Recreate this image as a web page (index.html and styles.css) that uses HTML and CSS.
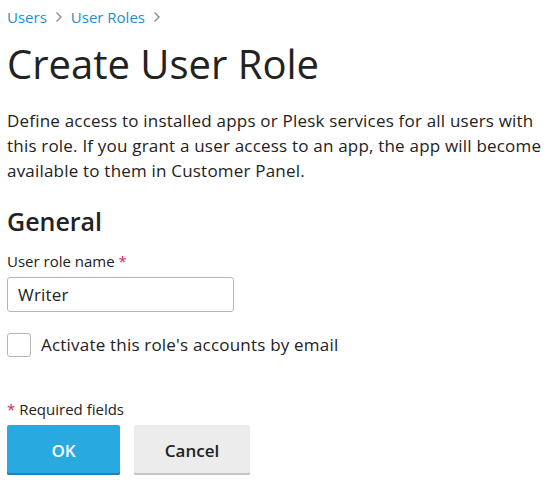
FILE: index.html
```html
<!DOCTYPE html>
<html lang="en">
<head>
<meta charset="utf-8">
<title>Create User Role</title>
<link rel="stylesheet" href="styles.css">
</head>
<body>
<div class="page">
  <nav class="breadcrumbs">
    <a href="#" class="crumb">Users</a>
    <span class="sep"><svg width="8" height="12" viewBox="0 0 8 12"><path d="M1.5 1.5 L6 6 L1.5 10.5" fill="none" stroke="#8a8a8a" stroke-width="1.4"/></svg></span>
    <a href="#" class="crumb">User Roles</a>
    <span class="sep"><svg width="8" height="12" viewBox="0 0 8 12"><path d="M1.5 1.5 L6 6 L1.5 10.5" fill="none" stroke="#8a8a8a" stroke-width="1.4"/></svg></span>
  </nav>
  <h1 class="title">Create User Role</h1>
  <p class="intro">Define access to installed apps or Plesk services for all users with this role. If you grant a user access to an app, the app will become available to them in Customer Panel.</p>
  <h2 class="section">General</h2>
  <div class="field">
    <label class="label">User role name <span class="req">*</span></label>
    <input class="input" type="text" value="Writer">
  </div>
  <label class="check">
    <span class="box"></span>
    <span class="check-text">Activate this role's accounts by email</span>
  </label>
  <div class="required-note"><span class="req">*</span> Required fields</div>
  <div class="buttons">
    <button class="btn btn-primary">OK</button>
    <button class="btn btn-secondary">Cancel</button>
  </div>
</div>
</body>
</html>
```
FILE: styles.css
```css
* { box-sizing: border-box; }
html, body { margin: 0; padding: 0; background: #fff; }
body {
  font-family: "Open Sans", "Noto Sans", sans-serif;
  color: #222;
}
.page {
  padding: 6px 7px 0 7px;
  display: flex;
  flex-direction: column;
}
.breadcrumbs {
  display: flex;
  align-items: center;
  gap: 8px;
  font-size: 15px;
  line-height: 22px;
}
.crumb { color: #1f8fc7; text-decoration: none; }
.sep { display: flex; align-items: center; }
.title {
  margin: 12px 0 0 0;
  font-size: 40px;
  font-weight: 400;
  line-height: 48px;
  color: #222;
}
.intro {
  margin: 20px 0 0 0;
  font-size: 17px;
  letter-spacing: 0.2px;
  line-height: 25px;
  color: #222;
}
.section {
  margin: 22px 0 0 0;
  font-size: 25px;
  font-weight: 600;
  line-height: 32px;
}
.field {
  margin-top: 14px;
  display: flex;
  flex-direction: column;
  gap: 6px;
}
.label { font-size: 15px; line-height: 20px; color: #222; }
.req { color: #d0274c; }
.input {
  width: 227px;
  height: 35px;
  border: 1px solid #b5b5b5;
  border-radius: 3px;
  padding: 0 10px;
  font-family: inherit;
  font-size: 17px;
  letter-spacing: 0.2px;
  color: #222;
  outline: none;
}
.check {
  margin-top: 21px;
  display: flex;
  align-items: center;
  gap: 10px;
}
.box {
  width: 24px;
  height: 24px;
  border: 1px solid #b5b5b5;
  border-radius: 3px;
  background: #fff;
}
.check-text { font-size: 17px; letter-spacing: 0.2px; line-height: 24px; }
.required-note {
  margin-top: 42px;
  font-size: 15px;
  line-height: 20px;
}
.buttons {
  margin-top: 6px;
  display: flex;
  gap: 14px;
}
.btn {
  height: 50px;
  border: none;
  border-radius: 2px;
  font-family: inherit;
  font-size: 17px;
  font-weight: 600;
  padding: 0;
}
.btn-primary {
  width: 113px;
  background: #28a9df;
  color: #fff;
  box-shadow: inset 0 -2px 0 #1b86b6;
}
.btn-secondary {
  width: 116px;
  background: #ececec;
  color: #222;
  box-shadow: inset 0 -2px 0 #c5c5c5;
}
```
